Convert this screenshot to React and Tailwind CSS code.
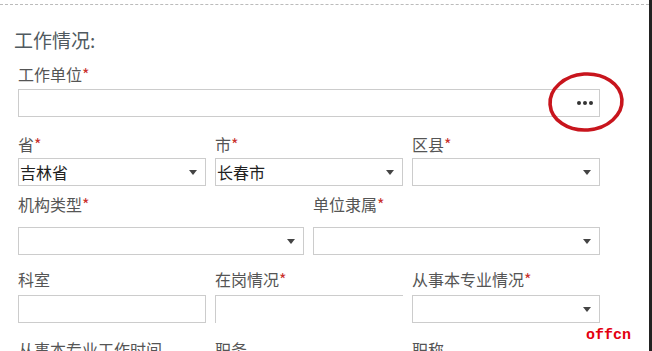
import React from "react";

function Label({ text, req, className = "" }) {
  return (
    <div className={`h-5 text-[16px] leading-5 text-[#555] whitespace-nowrap ${className}`}>
      {text}
      {req && <span className="text-[#c9302c]">*</span>}
    </div>
  );
}

function Caret() {
  return <span className="w-0 h-0 border-l-[4px] border-r-[4px] border-t-[5px] border-l-transparent border-r-transparent border-t-[#444]" />;
}

function Select({ value }) {
  return (
    <div className="h-[28px] border border-[#ccc] bg-white flex items-center justify-between pl-px pr-[8px] text-[16px] leading-5 text-[#222]">
      <span>{value}</span>
      <Caret />
    </div>
  );
}

function Input() {
  return <div className="h-[28px] border border-[#ccc] bg-white" />;
}

export default function App() {
  return (
    <div className="relative w-[652px] h-[351px] overflow-hidden bg-white flex font-['Noto_Sans_CJK_SC',sans-serif]">
      <div className="flex-1 flex flex-col pt-[4px]">
        <div className="border-t border-dashed border-[#bbb]" />

        <div className="mt-[23px] ml-[14px] h-6 text-[19px] leading-6 text-[#505a60]">工作情况:</div>

        <div className="pl-[18px] w-[600px] flex flex-col">
          <Label text="工作单位" req className="mt-[12px]" />
          <div className="relative mt-[5px]">
            <div className="h-[28px] border border-[#ccc] bg-white flex items-center justify-end pr-[6px]">
              <div className="flex gap-[2px]">
                <span className="w-[4px] h-[4px] rounded-full bg-[#333]" />
                <span className="w-[4px] h-[4px] rounded-full bg-[#333]" />
                <span className="w-[4px] h-[4px] rounded-full bg-[#333]" />
              </div>
            </div>
            <svg className="absolute left-[529px] top-[-18px]" width="78" height="62" viewBox="0 0 78 62">
              <ellipse cx="39" cy="31" rx="36" ry="28" fill="none" stroke="#c8151d" strokeWidth="3.6" transform="rotate(-4 39 31)" />
            </svg>
          </div>

          <div className="grid grid-cols-[188px_188px_188px] justify-between mt-[17px]">
            <div>
              <Label text="省" req />
              <div className="mt-[4px]"><Select value="吉林省" /></div>
            </div>
            <div>
              <Label text="市" req />
              <div className="mt-[4px]"><Select value="长春市" /></div>
            </div>
            <div>
              <Label text="区县" req />
              <div className="mt-[4px]"><Select value="" /></div>
            </div>
          </div>

          <div className="grid grid-cols-[286px_287px] gap-x-[9px] mt-[8px]">
            <div>
              <Label text="机构类型" req />
              <div className="mt-[13px]"><Select value="" /></div>
            </div>
            <div>
              <Label text="单位隶属" req />
              <div className="mt-[13px]"><Select value="" /></div>
            </div>
          </div>

          <div className="grid grid-cols-[188px_188px_188px] justify-between mt-[14px]">
            <div>
              <Label text="科室" />
              <div className="mt-[6px]"><Input /></div>
            </div>
            <div>
              <Label text="在岗情况" req />
              <div className="mt-[6px] h-[28px] border-t border-l border-[#ccc]" />
            </div>
            <div>
              <Label text="从事本专业情况" req />
              <div className="mt-[6px]"><Select value="" /></div>
            </div>
          </div>

          <div className="grid grid-cols-[188px_188px_188px] justify-between mt-[16px]">
            <Label text="从事本专业工作时间" />
            <Label text="职务" />
            <Label text="职称" />
          </div>
        </div>
      </div>
      <div className="w-[3px] bg-[#222]" />

      <div className="absolute left-[586px] top-[326px] text-[15px] leading-5 font-bold text-[#e3000f] font-['Liberation_Mono',monospace]">
        offcn
      </div>
    </div>
  );
}
